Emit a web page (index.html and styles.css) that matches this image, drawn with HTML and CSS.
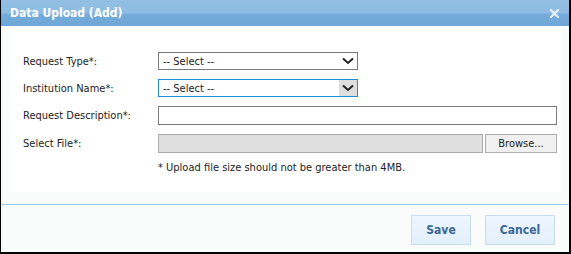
FILE: index.html
```html
<!DOCTYPE html>
<html lang="en">
<head>
    <meta charset="UTF-8">
    <title>Data Upload (Add)</title>
    <link rel="stylesheet" href="styles.css">
</head>
<body>
    <div class="dialog">
        <div class="titlebar">
            <span class="title">Data Upload (Add)</span>
            <svg class="close" width="9" height="9" viewBox="0 0 9 9">
                <path d="M1 1 L8 8 M8 1 L1 8" stroke="#e4eef7" stroke-width="2.4" stroke-linecap="square"/>
            </svg>
        </div>

        <div class="form">
            <div class="row">
                <label for="req_type">Request Type*:</label>
                <div class="select">
                    <span>-- Select --</span>
                    <span class="arrow"><svg width="12" height="8" viewBox="0 0 12 8"><path d="M1 1.5 L6 6 L11 1.5" fill="none" stroke="#222" stroke-width="2"/></svg></span>
                </div>
            </div>
            <div class="row">
                <label for="inst_name">Institution Name*:</label>
                <div class="select focus">
                    <span>-- Select --</span>
                    <span class="arrow"><svg width="12" height="8" viewBox="0 0 12 8"><path d="M1 1.5 L6 6 L11 1.5" fill="none" stroke="#222" stroke-width="2"/></svg></span>
                </div>
            </div>
            <div class="row">
                <label for="req_desc">Request Description*:</label>
                <input type="text" id="req_desc" class="text">
            </div>
            <div class="row">
                <label for="req_file">Select File*:</label>
                <div class="file">
                    <div class="file-name"></div>
                    <div class="browse">Browse...</div>
                </div>
            </div>
            <div class="note">* Upload file size should not be greater than 4MB.</div>
        </div>

        <div class="footer">
            <button class="btn save">Save</button>
            <button class="btn cancel">Cancel</button>
        </div>
    </div>
</body>
</html>
```

FILE: styles.css
```css
body {
    margin: 0;
    font-family: Tahoma, "DejaVu Sans Condensed", "Liberation Sans", sans-serif;
    font-size: 11px;
    color: #222;
}

.dialog {
    width: 571px;
    height: 254px;
    box-sizing: border-box;
    border-style: solid;
    border-color: #000;
    border-width: 0 2px 2px 1px;
    background: #fafcfc;
    display: flex;
    flex-direction: column;
}

.titlebar {
    height: 26px;
    display: flex;
    align-items: center;
    justify-content: space-between;
    padding: 0 10px 0 9px;
    background: linear-gradient(#92bfe3 0, #8ebce2 50%, #73aad9 56%, #6ea7d7 100%);
}

.title {
    color: #fff;
    font-family: "DejaVu Sans Condensed", sans-serif;
    font-weight: bold;
    font-size: 12px;
}

.form {
    background: #fff;
    margin: 2px 7px 0 8px;
    padding: 24px 0 0 14px;
    height: 140px;
}

.row {
    display: flex;
    align-items: center;
    margin-bottom: 9px;
}

.row label {
    width: 135px;
}

.select {
    width: 200px;
    height: 18px;
    box-sizing: border-box;
    border: 1px solid #7a7a7a;
    display: flex;
    align-items: center;
    justify-content: space-between;
    padding-left: 4px;
    background: #fff;
}

.select.focus {
    border-color: #1e90d8;
}

.arrow {
    width: 18px;
    height: 16px;
    display: flex;
    align-items: center;
    justify-content: center;
}

.focus .arrow {
    background: #dedede;
}

.text {
    width: 399px;
    height: 19px;
    box-sizing: border-box;
    border: 1px solid #7a7a7a;
    margin: 0;
}

.file {
    display: flex;
    gap: 2px;
}

.file-name {
    width: 325px;
    height: 19px;
    box-sizing: border-box;
    border: 1px solid #acacac;
    background: #dfdfdf;
}

.browse {
    width: 72px;
    height: 19px;
    box-sizing: border-box;
    border: 1px solid #adadad;
    background: #f0f0f0;
    display: flex;
    align-items: center;
    justify-content: center;
}

.note {
    margin-left: 135px;
    margin-top: -1px;
}

.footer {
    margin-top: 12px;
    border-top: 1px solid #9ccbe8;
    display: flex;
    justify-content: flex-end;
    gap: 14px;
    padding: 10px 14px 0 0;
}

.btn {
    height: 30px;
    padding: 0;
    border: 1px solid #c6dcef;
    background: linear-gradient(#eef6fe, #e3effb);
    color: #3a6794;
    font-family: "DejaVu Sans Condensed", sans-serif;
    font-weight: bold;
    font-size: 12px;
}

.btn.save {
    width: 60px;
}

.btn.cancel {
    width: 70px;
}
```
